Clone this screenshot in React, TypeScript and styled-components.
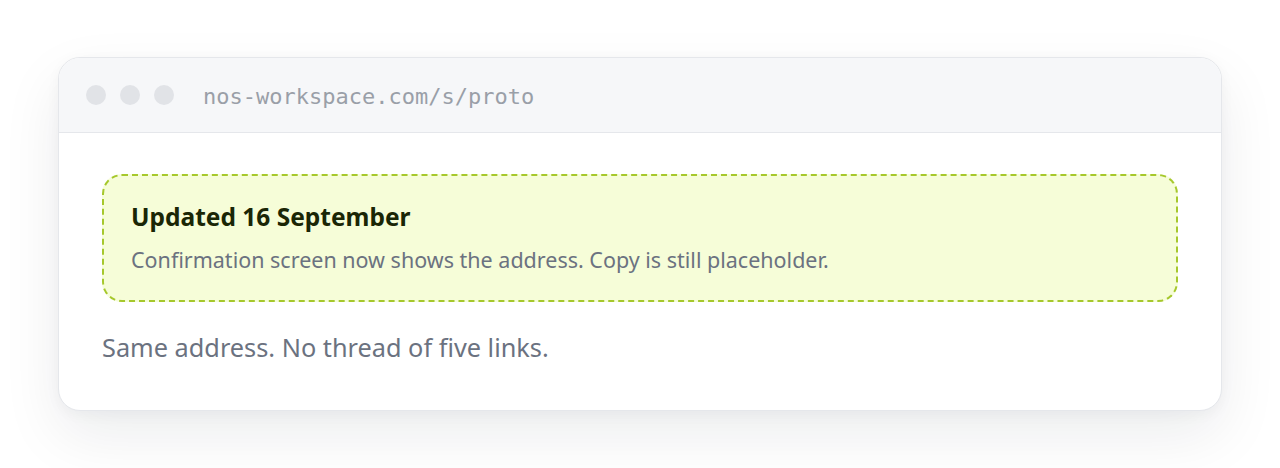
import React from "react";
import styled, { createGlobalStyle } from "styled-components";

const GlobalStyle = createGlobalStyle`
  html, body {
    margin: 0;
    padding: 0;
    background: #ffffff;
  }

  body {
    font-family: "Noto Sans", "Open Sans", sans-serif;
  }
`;

const App = () => {
  return (
    <>
      <GlobalStyle />
      <Page>
        <BrowserWindow>
          <TitleBar>
            <Dots>
              <Dot />
              <Dot />
              <Dot />
            </Dots>
            <Url>nos-workspace.com/s/proto</Url>
          </TitleBar>
          <Body>
            <Callout>
              <CalloutTitle>Updated 16 September</CalloutTitle>
              <CalloutText>
                Confirmation screen now shows the address. Copy is still
                placeholder.
              </CalloutText>
            </Callout>
            <Lead>Same address. No thread of five links.</Lead>
          </Body>
        </BrowserWindow>
      </Page>
    </>
  );
};

export default App;

const Page = styled.div`
  width: 1280px;
  height: 468px;
  box-sizing: border-box;
  padding: 57px 58px;
`;

const BrowserWindow = styled.div`
  display: flex;
  flex-direction: column;

  background-color: #ffffff;
  border: 1px solid #e5e7eb;
  border-radius: 22px;
  overflow: hidden;

  box-shadow: 0 24px 60px rgba(17, 24, 39, 0.08),
    0 4px 14px rgba(17, 24, 39, 0.04);
`;

const TitleBar = styled.div`
  display: flex;
  align-items: center;

  height: 74px;
  padding: 0 28px 0 27px;
  gap: 29px;

  background-color: #f6f7f9;
  border-bottom: 1px solid #e5e7eb;
`;

const Dots = styled.div`
  display: flex;
  gap: 14px;
`;

const Dot = styled.span`
  width: 20px;
  height: 20px;
  border-radius: 50%;
  background-color: #e1e3e7;
`;

const Url = styled.div`
  font-family: "DejaVu Sans Mono", "Liberation Mono", monospace;
  font-size: 22px;
  color: #9a9fa8;
  margin-top: 2px;
`;

const Body = styled.div`
  display: flex;
  flex-direction: column;

  padding: 41px 43px 47px;
  gap: 29px;
`;

const Callout = styled.div`
  display: flex;
  flex-direction: column;

  padding: 26px 27px 26px;
  gap: 14px;

  background-color: #f6fdd8;
  border: 2px dashed #a6c82c;
  border-radius: 20px;
`;

const CalloutTitle = styled.div`
  font-size: 24.5px;
  font-weight: 700;
  line-height: 30px;
  color: #1a2605;
`;

const CalloutText = styled.div`
  font-size: 21.5px;
  line-height: 28px;
  color: #6b7280;
`;

const Lead = styled.div`
  font-size: 25.3px;
  line-height: 32px;
  color: #6b7280;
`;
